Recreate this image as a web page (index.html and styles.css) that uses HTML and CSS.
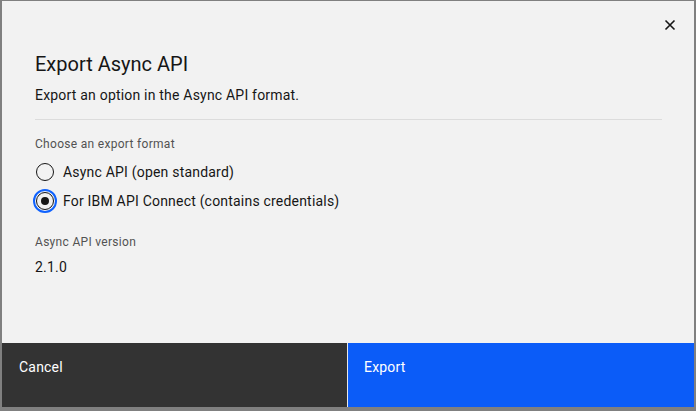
FILE: index.html
```html
<!DOCTYPE html>
<html lang="en">
<head>
<meta charset="utf-8">
<title>Export Async API</title>
<link rel="stylesheet" href="styles.css">
</head>
<body>
<div class="modal">
  <button class="close" aria-label="Close">
    <svg width="16" height="16" viewBox="0 0 16 16"><path d="M3.5 3.5 L12.5 12.5 M12.5 3.5 L3.5 12.5" stroke="#161616" stroke-width="1.6" fill="none"/></svg>
  </button>
  <div class="body">
    <h2 class="title">Export Async API</h2>
    <p class="subtitle">Export an option in the Async API format.</p>
    <hr class="divider">
    <div class="group" role="radiogroup">
      <div class="label">Choose an export format</div>
      <label class="radio"><span class="dot"></span><span>Async API (open standard)</span></label>
      <label class="radio checked"><span class="dot"></span><span>For IBM API Connect (contains credentials)</span></label>
    </div>
    <div class="label version-label">Async API version</div>
    <div class="value">2.1.0</div>
  </div>
  <div class="footer">
    <button class="btn secondary">Cancel</button>
    <button class="btn primary">Export</button>
  </div>
</div>
</body>
</html>
```
FILE: styles.css
```css
* { box-sizing: border-box; }
html, body { margin: 0; padding: 0; }
body {
  background: #808080;
  width: 696px;
  height: 411px;
  overflow: hidden;
  font-family: Roboto, "Liberation Sans", sans-serif;
  color: #161616;
}
.modal {
  position: relative;
  margin: 1px 2px 0 2px;
  height: 406px;
  background: #f2f2f2;
  display: flex;
  flex-direction: column;
}
.close {
  position: absolute;
  top: 0;
  right: 0;
  width: 48px;
  height: 48px;
  border: 0;
  background: transparent;
  padding: 0;
  display: flex;
  align-items: center;
  justify-content: center;
}
.body {
  flex: 1;
  padding: 49px 32px 0 33px;
}
.title {
  margin: 0;
  font-size: 20px;
  line-height: 28px;
  font-weight: 400;
}
.subtitle {
  margin: 7px 0 0 0;
  font-size: 14px;
  line-height: 20px;
  letter-spacing: 0.2px;
}
.divider {
  margin: 14px 0 0 0;
  border: 0;
  height: 1px;
  background: #dcdcdc;
}
.label {
  font-size: 12px;
  line-height: 16px;
  color: #525252;
  letter-spacing: 0.3px;
}
.group .label { margin-top: 16px; }
.radio {
  display: flex;
  align-items: center;
  gap: 9px;
  font-size: 14px;
  line-height: 20px;
  height: 29px;
  padding-left: 1px;
  letter-spacing: 0.2px;
}
.group .label + .radio { margin-top: 5px; }
.dot {
  width: 18px;
  height: 18px;
  border: 1px solid #161616;
  border-radius: 50%;
  position: relative;
  flex: none;
}
.checked .dot {
  outline: 2px solid #0f62fe;
  outline-offset: 1px;
}
.checked .dot::after {
  content: "";
  position: absolute;
  left: 4px;
  top: 4px;
  width: 8px;
  height: 8px;
  border-radius: 50%;
  background: #161616;
}
.version-label { margin-top: 19px; }
.value {
  margin-top: 7px;
  font-size: 14px;
  line-height: 20px;
  letter-spacing: 0.2px;
}
.footer {
  height: 64px;
  display: grid;
  grid-template-columns: 345px 346px;
  gap: 1px;
  background: #e8e8e8;
}
.btn {
  border: 0;
  margin: 0;
  font-family: inherit;
  font-size: 14px;
  line-height: 18px;
  letter-spacing: 0.2px;
  color: #ffffff;
  text-align: left;
  display: flex;
  align-items: flex-start;
  padding: 15px 16px 0 16px;
}
.secondary { background: #333333; padding-left: 17px; }
.primary { background: #0b5cf8; }
```
